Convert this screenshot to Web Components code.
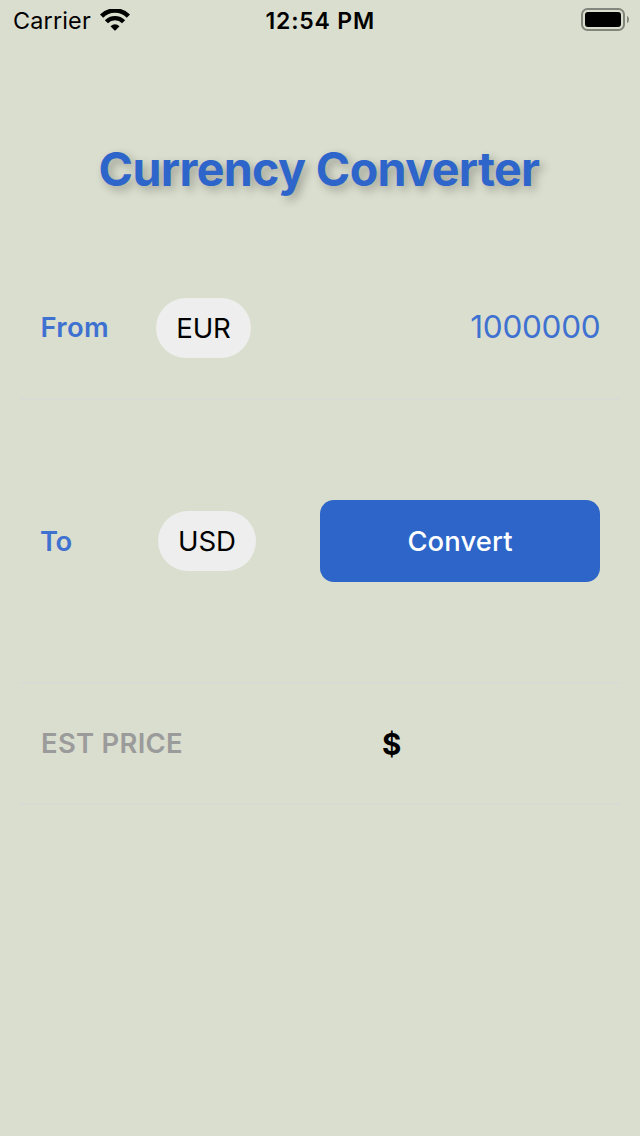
<!DOCTYPE html>
<html lang="en">
<head>
<meta charset="utf-8">
<title>Currency Converter</title>
<style>
  html, body { margin: 0; height: 100%; overflow: hidden; background: #dadece; }
  body { font-family: Inter, "Liberation Sans", sans-serif; }
</style>
</head>
<body>
<converter-app></converter-app>
<script>
const define = (name, html) => {
  const t = document.createElement('template');
  t.innerHTML = html;
  customElements.define(name, class extends HTMLElement {
    constructor() {
      super();
      this.attachShadow({ mode: 'open' }).appendChild(t.content.cloneNode(true));
    }
  });
};

define('wifi-icon', `
<style>:host{display:block;width:30px;height:22px} svg{display:block}</style>
<svg width="30" height="22" viewBox="0 0 30 22">
  <path d="M1.6 7.1 A19 19 0 0 1 28.4 7.1" fill="none" stroke="#000" stroke-width="4.6"/>
  <path d="M6.4 12.7 A12 12 0 0 1 23.6 12.7" fill="none" stroke="#000" stroke-width="4.3"/>
  <path d="M10.5 17.3 Q15 13.2 19.5 17.3 L15.7 21.2 Q15 21.9 14.3 21.2 Z" fill="#000"/>
</svg>`);

define('battery-icon', `
<style>:host{display:block;width:49px;height:23px} svg{display:block}</style>
<svg width="49" height="23" viewBox="0 0 49 23">
  <rect x="1" y="1" width="42" height="21" rx="5.5" fill="none" stroke="#83867c" stroke-width="2"/>
  <rect x="4" y="4" width="36" height="15" rx="3" fill="#000"/>
  <path d="M46 7.7 Q48 9 48 11.5 Q48 14 46 15.3 Z" fill="#83867c"/>
</svg>`);

define('status-bar', `
<style>
  :host{display:grid;grid-template-columns:1fr auto 1fr;align-items:center;height:40px;box-sizing:border-box;padding:0 10px 0 13px;color:#000;font-size:23.4px;line-height:40px}
  .left{display:flex;align-items:center;gap:9px;letter-spacing:.17px}
  .left span,.time{padding-top:1px}
  wifi-icon{margin-bottom:1px}
  .time{font-weight:600;letter-spacing:.82px;font-size:23px;margin-right:2.5px}
  battery-icon{justify-self:end;margin-bottom:2px}
</style>
<div class="left"><span>Carrier</span><wifi-icon></wifi-icon></div>
<div class="time"><slot></slot></div>
<battery-icon></battery-icon>`);

define('app-title', `
<style>
  :host{display:block;text-align:center;height:60px;line-height:60px;font-size:46.6px;font-weight:700;letter-spacing:-.64px;padding-right:2px;color:#2d65cb;text-shadow:4px 4px 10px rgba(0,0,0,.29)}
</style><slot></slot>`);

define('form-row', `
<style>
  :host{display:flex;align-items:center;margin:0 20px;padding:0 20px;box-sizing:border-box;border-bottom:2px solid #d8dbd4}
</style><slot></slot>`);

define('row-label', `
<style>:host{display:block;font-size:27.4px;font-weight:600;color:#3f71d1;line-height:34px;white-space:nowrap}</style><slot></slot>`);

define('currency-pill', `
<style>:host{display:block;box-sizing:border-box;height:60px;border-radius:30px;background:#eee;color:#000;text-align:center;font-size:27.6px;letter-spacing:-.1px;line-height:60px}</style><slot></slot>`);

define('amount-value', `
<style>:host{display:block;margin-left:auto;color:#3f71d1;font-size:31.5px;letter-spacing:-.3px;margin-right:-.3px;line-height:38px;padding-bottom:2px}</style><slot></slot>`);

define('convert-button', `
<style>
  :host{display:block;margin-left:auto;width:280px;height:82px}
  button{all:unset;display:block;width:100%;height:100%;border-radius:14px;background:#2d65c9;color:#fff;text-align:center;font-size:27.4px;font-weight:500;letter-spacing:.12px;line-height:82px}
</style><button><slot></slot></button>`);

define('price-value', `
<style>:host{display:block;font-size:29.5px;font-weight:700;color:#000;line-height:34px}</style><slot></slot>`);

define('converter-app', `
<style>
  :host{display:block;height:100%;background:#dadece}
  app-title{margin-top:99px}
  .from{height:142px;margin-top:59px}
  row-label{box-sizing:border-box}
  .from row-label{width:116px;letter-spacing:.35px;padding:0 0 2px .5px}
  .from currency-pill{width:95px}
  .to{height:284px}
  .to row-label{width:118px;letter-spacing:-.4px}
  .to currency-pill{width:98px}
  .price{height:121px}
  .price row-label{width:342px;color:#9b9b9b;letter-spacing:.3px;padding:0 0 2px 1px}
</style>
<status-bar>12:54 PM</status-bar>
<app-title>Currency Converter</app-title>
<form-row class="from"><row-label>From</row-label><currency-pill>EUR</currency-pill><amount-value>1000000</amount-value></form-row>
<form-row class="to"><row-label>To</row-label><currency-pill>USD</currency-pill><convert-button>Convert</convert-button></form-row>
<form-row class="price"><row-label>EST PRICE</row-label><price-value>$</price-value></form-row>`);
</script>
</body>
</html>
